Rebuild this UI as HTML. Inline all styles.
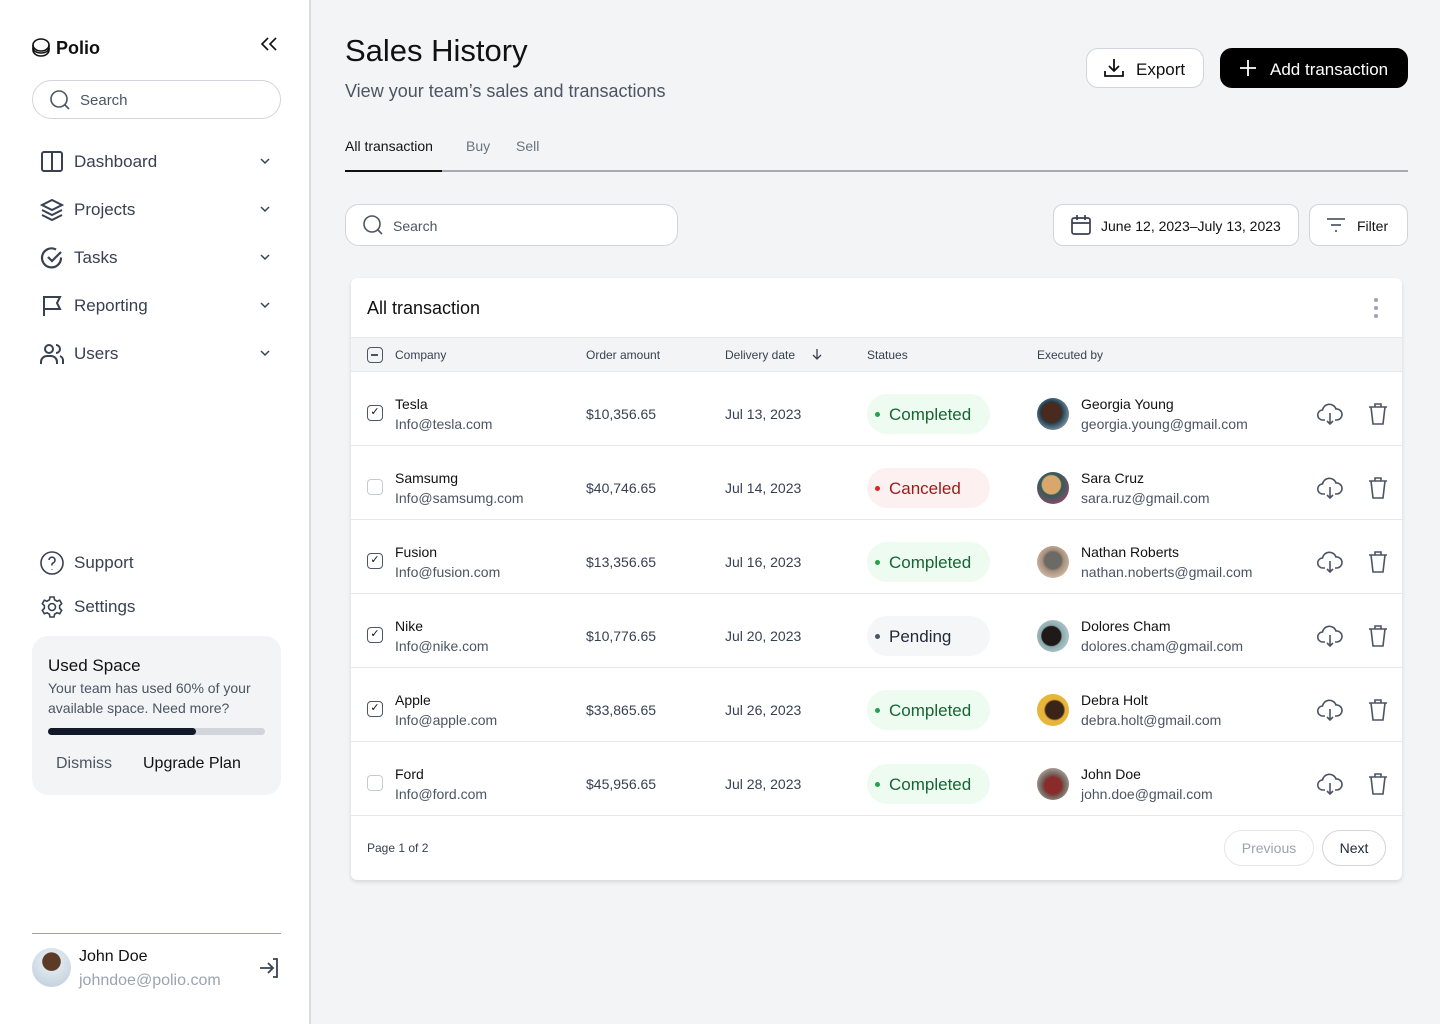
<!DOCTYPE html>
<html><head><meta charset="utf-8">
<style>
*{box-sizing:border-box;margin:0;padding:0}
body{width:1440px;height:1024px;overflow:hidden;background:#f3f4f6;font-family:"Liberation Sans",sans-serif;color:#111;position:relative}
.abs{position:absolute}
.side{position:absolute;left:0;top:0;width:311px;height:1024px;background:#fff;border-right:2px solid #d9dbe0}
.nav{position:absolute;left:40px;display:flex;align-items:center;font-size:17px;color:#374151}
.nav svg{margin-right:10px}
.chev{position:absolute;left:258px}
.card{position:absolute;left:351px;top:278px;width:1051px;height:602px;background:#fff;border-radius:6px;box-shadow:0 2px 4px rgba(0,0,0,.12)}
.row{position:absolute;left:0;width:1051px;height:74px;border-top:1px solid #e5e7eb}
.row .cb{position:absolute;left:16px;top:33px;width:16px;height:16px;border:1.5px solid #4b5563;border-radius:4px;font-size:11px;line-height:13px;text-align:center;color:#111}
.row .cb.off{border-color:#c7cbd1}
.row .co{position:absolute;left:44px;top:24px;font-size:14px;color:#111}
.row .em{position:absolute;left:44px;top:44px;font-size:14px;color:#4b5563}
.row .am{position:absolute;left:235px;top:34px;font-size:14px;color:#374151}
.row .dt{position:absolute;left:374px;top:34px;font-size:14px;color:#374151}
.pill{position:absolute;left:516px;top:22px;width:123px;height:40px;border-radius:20px;font-size:17px;padding:11px 0 0 22px}
.pill:before{content:"";position:absolute;left:8px;top:18px;width:5px;height:5px;border-radius:50%;background:currentColor}
.ok{background:#edfbf0;color:#166534}.ok:before{background:#22a34a}
.cx{background:#fdf0f0;color:#991b1b}.cx:before{background:#dc2626}
.pd{background:#f5f6f8;color:#1f2937}.pd:before{background:#4b5563}
.av{position:absolute;left:686px;top:26px;width:32px;height:32px;border-radius:50%}
.nm{position:absolute;left:730px;top:24px;font-size:14px;color:#111}
.ml{position:absolute;left:730px;top:44px;font-size:14px;color:#4b5563}
.ic1{position:absolute;left:966px;top:30px}
.ic2{position:absolute;left:1016px;top:30px}
</style></head><body>
<div class="side">
  <svg class="abs" style="left:31px;top:37px" width="20" height="22" viewBox="0 0 20 22" fill="none" stroke="#111" stroke-width="1.6"><ellipse cx="10" cy="8" rx="8" ry="6"/><path d="M2 8v5c0 3.3 3.6 6 8 6s8-2.7 8-6V8"/><path d="M2 11c0 3 3.6 5 8 5s8-2 8-5"/></svg>
  <div class="abs" style="left:56px;top:38px;font-size:18px;font-weight:bold;color:#111">Polio</div>
  <svg class="abs" style="left:259px;top:35px" width="20" height="18" viewBox="0 0 20 18" fill="none" stroke="#111" stroke-width="1.6"><path d="M9 3 3 9l6 6M17 3l-6 6 6 6"/></svg>
  <div class="abs" style="left:32px;top:80px;width:249px;height:39px;border:1.5px solid #d1d5db;border-radius:20px"></div>
  <svg class="abs" style="left:49px;top:89px" width="22" height="22" viewBox="0 0 22 22" fill="none" stroke="#4b5563" stroke-width="1.6"><circle cx="10" cy="10" r="8"/><path d="m16 16 4 4"/></svg>
  <div class="abs" style="left:80px;top:92px;font-size:15px;color:#4b5563">Search</div>

  <div class="nav" style="top:150px"><svg width="24" height="24" viewBox="0 0 24 24" fill="none" stroke="#374151" stroke-width="2"><rect x="2" y="2" width="20" height="19" rx="2"/><path d="M12 2v19"/></svg>Dashboard</div>
  <div class="nav" style="top:198px"><svg width="24" height="24" viewBox="0 0 24 24" fill="none" stroke="#374151" stroke-width="2"><path d="M12 2 2 7l10 5 10-5z"/><path d="m2 12 10 5 10-5M2 17l10 5 10-5"/></svg>Projects</div>
  <div class="nav" style="top:246px"><svg width="24" height="24" viewBox="0 0 24 24" fill="none" stroke="#374151" stroke-width="2.2"><path d="M21 11.5A9.5 9.5 0 1 1 16 3.5"/><path d="m8 11 4 4 9-9"/></svg>Tasks</div>
  <div class="nav" style="top:294px"><svg width="24" height="24" viewBox="0 0 24 24" fill="none" stroke="#374151" stroke-width="2"><path d="M4 22V3h16l-3 6 3 6H4"/></svg>Reporting</div>
  <div class="nav" style="top:342px"><svg width="24" height="24" viewBox="0 0 24 24" fill="none" stroke="#374151" stroke-width="2"><circle cx="9" cy="7" r="4"/><path d="M1 22v-2a6 6 0 0 1 6-6h4a6 6 0 0 1 6 6v2M16 3a4 4 0 0 1 0 8M20 14a5 5 0 0 1 3 5v3"/></svg>Users</div>
  <svg class="chev" style="top:156px" width="14" height="10" viewBox="0 0 14 10" fill="none" stroke="#374151" stroke-width="1.5"><path d="m3 3 4 4 4-4"/></svg>
  <svg class="chev" style="top:204px" width="14" height="10" viewBox="0 0 14 10" fill="none" stroke="#374151" stroke-width="1.5"><path d="m3 3 4 4 4-4"/></svg>
  <svg class="chev" style="top:252px" width="14" height="10" viewBox="0 0 14 10" fill="none" stroke="#374151" stroke-width="1.5"><path d="m3 3 4 4 4-4"/></svg>
  <svg class="chev" style="top:300px" width="14" height="10" viewBox="0 0 14 10" fill="none" stroke="#374151" stroke-width="1.5"><path d="m3 3 4 4 4-4"/></svg>
  <svg class="chev" style="top:348px" width="14" height="10" viewBox="0 0 14 10" fill="none" stroke="#374151" stroke-width="1.5"><path d="m3 3 4 4 4-4"/></svg>

  <div class="nav" style="top:551px"><svg width="24" height="24" viewBox="0 0 24 24" fill="none" stroke="#374151" stroke-width="1.6"><circle cx="12" cy="12" r="11"/><path d="M9 9a3 3 0 1 1 4 3c-1 .5-1 1-1 2.5M12 18v.5"/></svg>Support</div>
  <div class="nav" style="top:595px"><svg width="24" height="24" viewBox="0 0 24 24" fill="none" stroke="#374151" stroke-width="1.6"><circle cx="12" cy="12" r="3.5"/><path d="M10 2h4l.6 2.8 2.4 1.4 2.7-1 2 3.5-2.1 1.9v2.8l2.1 1.9-2 3.5-2.7-1-2.4 1.4L14 22h-4l-.6-2.8L7 17.8l-2.7 1-2-3.5 2.1-1.9v-2.8L2.3 8.7l2-3.5 2.7 1 2.4-1.4z"/></svg>Settings</div>

  <div class="abs" style="left:32px;top:636px;width:249px;height:159px;background:#f3f4f6;border-radius:16px">
    <div class="abs" style="left:16px;top:20px;font-size:17px;color:#111">Used Space</div>
    <div class="abs" style="left:16px;top:42px;width:225px;font-size:14px;line-height:20px;color:#4b5563">Your team has used 60% of your available space. Need more?</div>
    <div class="abs" style="left:16px;top:92px;width:217px;height:7px;background:#d1d5db;border-radius:4px"><div style="width:148px;height:7px;background:#111827;border-radius:4px"></div></div>
    <div class="abs" style="left:24px;top:119px;font-size:16px;color:#4b5563">Dismiss</div>
    <div class="abs" style="left:111px;top:119px;font-size:16px;color:#111">Upgrade Plan</div>
  </div>

  <div class="abs" style="left:32px;top:933px;width:249px;height:1px;background:#9ca3af"></div>
  <div class="abs" style="left:32px;top:948px;width:39px;height:39px;border-radius:50%;background:radial-gradient(circle at 50% 35%,#5b3a26 0 28%,#dfe7ee 30%,#b9c9d8 100%)"></div>
  <div class="abs" style="left:79px;top:948px;font-size:16px;color:#111">John Doe</div>
  <div class="abs" style="left:79px;top:972px;font-size:16px;color:#9ca3af">johndoe@polio.com</div>
  <svg class="abs" style="left:258px;top:957px" width="22" height="22" viewBox="0 0 22 22" fill="none" stroke="#374151" stroke-width="1.8"><path d="M2 11h12M10 6l5 5-5 5M15 2h4v18h-4"/></svg>
</div>

<div class="abs" style="left:345px;top:33px;font-size:31px;color:#111">Sales History</div>
<div class="abs" style="left:345px;top:81px;font-size:18px;color:#4b5563">View your team’s sales and transactions</div>

<div class="abs" style="left:1086px;top:48px;width:118px;height:40px;background:#fff;border:1px solid #d1d5db;border-radius:12px"></div>
<svg class="abs" style="left:1103px;top:57px" width="22" height="22" viewBox="0 0 22 22" fill="none" stroke="#111" stroke-width="1.8"><path d="M11 2v12M6 9l5 5 5-5M2 14v5h18v-5"/></svg>
<div class="abs" style="left:1136px;top:60px;font-size:17px;color:#111">Export</div>
<div class="abs" style="left:1220px;top:48px;width:188px;height:40px;background:#000;border-radius:12px"></div>
<svg class="abs" style="left:1238px;top:58px" width="20" height="20" viewBox="0 0 20 20" fill="none" stroke="#fff" stroke-width="1.8"><path d="M10 2v16M2 10h16"/></svg>
<div class="abs" style="left:1270px;top:60px;font-size:17px;color:#fff">Add transaction</div>

<div class="abs" style="left:345px;top:138px;font-size:14px;color:#111">All transaction</div>
<div class="abs" style="left:466px;top:138px;font-size:14px;color:#6b7280">Buy</div>
<div class="abs" style="left:516px;top:138px;font-size:14px;color:#6b7280">Sell</div>
<div class="abs" style="left:345px;top:170px;width:1063px;height:2px;background:#a8abb2"></div>
<div class="abs" style="left:345px;top:170px;width:97px;height:2px;background:#111"></div>

<div class="abs" style="left:345px;top:204px;width:333px;height:42px;background:#fff;border:1.5px solid #d1d5db;border-radius:14px"></div>
<svg class="abs" style="left:362px;top:214px" width="22" height="22" viewBox="0 0 22 22" fill="none" stroke="#4b5563" stroke-width="1.6"><circle cx="10" cy="10" r="8"/><path d="m16 16 4 4"/></svg>
<div class="abs" style="left:393px;top:218px;font-size:14px;color:#4b5563">Search</div>

<div class="abs" style="left:1053px;top:204px;width:246px;height:42px;background:#fff;border:1px solid #d1d5db;border-radius:10px"></div>
<svg class="abs" style="left:1070px;top:214px" width="22" height="22" viewBox="0 0 22 22" fill="none" stroke="#374151" stroke-width="1.7"><rect x="2" y="4" width="18" height="16" rx="2"/><path d="M2 9h18M7 1v5M15 1v5"/></svg>
<div class="abs" style="left:1101px;top:218px;font-size:14px;color:#111">June 12, 2023–July 13, 2023</div>
<div class="abs" style="left:1309px;top:204px;width:99px;height:42px;background:#fff;border:1px solid #d1d5db;border-radius:10px"></div>
<svg class="abs" style="left:1326px;top:216px" width="20" height="18" viewBox="0 0 20 18" fill="none" stroke="#374151" stroke-width="1.6"><path d="M1 3h18M5 9h10M9 15h2"/></svg>
<div class="abs" style="left:1357px;top:218px;font-size:14px;color:#111">Filter</div>

<div class="card">
  <div class="abs" style="left:16px;top:20px;font-size:18px;color:#111">All transaction</div>
  <svg class="abs" style="left:1021px;top:19px" width="8" height="22" viewBox="0 0 8 22" fill="#9ca3af"><circle cx="4" cy="3" r="2"/><circle cx="4" cy="11" r="2"/><circle cx="4" cy="19" r="2"/></svg>
  <div class="abs" style="left:0;top:59px;width:1051px;height:35px;background:#f3f4f6;border-top:1px solid #e5e7eb;border-bottom:1px solid #e5e7eb"></div>
  <div class="abs" style="left:16px;top:69px;width:16px;height:16px;border:1.5px solid #4b5563;border-radius:4px"><div style="position:absolute;left:3px;top:6px;width:7px;height:1.5px;background:#4b5563"></div></div>
  <div class="abs" style="left:44px;top:70px;font-size:12px;color:#374151">Company</div>
  <div class="abs" style="left:235px;top:70px;font-size:12px;color:#374151">Order amount</div>
  <div class="abs" style="left:374px;top:70px;font-size:12px;color:#374151">Delivery date</div>
  <svg class="abs" style="left:460px;top:70px" width="12" height="13" viewBox="0 0 12 13" fill="none" stroke="#374151" stroke-width="1.3"><path d="M6 1v10M2 7l4 4 4-4"/></svg>
  <div class="abs" style="left:516px;top:70px;font-size:12px;color:#374151">Statues</div>
  <div class="abs" style="left:686px;top:70px;font-size:12px;color:#374151">Executed by</div>

  <div class="row" style="top:93px"><div class="cb">✓</div><div class="co">Tesla</div><div class="em">Info@tesla.com</div><div class="am">$10,356.65</div><div class="dt">Jul 13, 2023</div><div class="pill ok">Completed</div><div class="av" style="background:radial-gradient(circle at 45% 45%,#4a2a1c 0 40%,#1d3a4d 42%,#c9d9da 100%)"></div><div class="nm">Georgia Young</div><div class="ml">georgia.young@gmail.com</div>
  <svg class="ic1" width="26" height="24" viewBox="0 0 26 24" fill="none" stroke="#4b5563" stroke-width="1.6"><path d="M8 18H6a5 5 0 0 1-.5-10A7 7 0 0 1 19 7a5 5 0 0 1 1 11h-2"/><path d="M13 11v11M10 19l3 3 3-3"/></svg><svg class="ic2" width="22" height="24" viewBox="0 0 22 24" fill="none" stroke="#4b5563" stroke-width="1.6"><path d="M2 5h18M8 5V2h6v3M4 5l2 17h10l2-17"/></svg></div>

  <div class="row" style="top:167px"><div class="cb off"></div><div class="co">Samsumg</div><div class="em">Info@samsumg.com</div><div class="am">$40,746.65</div><div class="dt">Jul 14, 2023</div><div class="pill cx">Canceled</div><div class="av" style="background:radial-gradient(circle at 45% 40%,#d9a66b 0 35%,#2f5d57 40%,#c83a7a 100%)"></div><div class="nm">Sara Cruz</div><div class="ml">sara.ruz@gmail.com</div>
  <svg class="ic1" width="26" height="24" viewBox="0 0 26 24" fill="none" stroke="#4b5563" stroke-width="1.6"><path d="M8 18H6a5 5 0 0 1-.5-10A7 7 0 0 1 19 7a5 5 0 0 1 1 11h-2"/><path d="M13 11v11M10 19l3 3 3-3"/></svg><svg class="ic2" width="22" height="24" viewBox="0 0 22 24" fill="none" stroke="#4b5563" stroke-width="1.6"><path d="M2 5h18M8 5V2h6v3M4 5l2 17h10l2-17"/></svg></div>

  <div class="row" style="top:241px"><div class="cb">✓</div><div class="co">Fusion</div><div class="em">Info@fusion.com</div><div class="am">$13,356.65</div><div class="dt">Jul 16, 2023</div><div class="pill ok">Completed</div><div class="av" style="background:radial-gradient(circle at 50% 45%,#6b6a66 0 35%,#a98f7a 45%,#e6ddd3 100%)"></div><div class="nm">Nathan Roberts</div><div class="ml">nathan.noberts@gmail.com</div>
  <svg class="ic1" width="26" height="24" viewBox="0 0 26 24" fill="none" stroke="#4b5563" stroke-width="1.6"><path d="M8 18H6a5 5 0 0 1-.5-10A7 7 0 0 1 19 7a5 5 0 0 1 1 11h-2"/><path d="M13 11v11M10 19l3 3 3-3"/></svg><svg class="ic2" width="22" height="24" viewBox="0 0 22 24" fill="none" stroke="#4b5563" stroke-width="1.6"><path d="M2 5h18M8 5V2h6v3M4 5l2 17h10l2-17"/></svg></div>

  <div class="row" style="top:315px"><div class="cb">✓</div><div class="co">Nike</div><div class="em">Info@nike.com</div><div class="am">$10,776.65</div><div class="dt">Jul 20, 2023</div><div class="pill pd">Pending</div><div class="av" style="background:radial-gradient(circle at 45% 50%,#1f1a18 0 40%,#8aa8ac 45%,#cfe0e1 100%)"></div><div class="nm">Dolores Cham</div><div class="ml">dolores.cham@gmail.com</div>
  <svg class="ic1" width="26" height="24" viewBox="0 0 26 24" fill="none" stroke="#4b5563" stroke-width="1.6"><path d="M8 18H6a5 5 0 0 1-.5-10A7 7 0 0 1 19 7a5 5 0 0 1 1 11h-2"/><path d="M13 11v11M10 19l3 3 3-3"/></svg><svg class="ic2" width="22" height="24" viewBox="0 0 22 24" fill="none" stroke="#4b5563" stroke-width="1.6"><path d="M2 5h18M8 5V2h6v3M4 5l2 17h10l2-17"/></svg></div>

  <div class="row" style="top:389px"><div class="cb">✓</div><div class="co">Apple</div><div class="em">Info@apple.com</div><div class="am">$33,865.65</div><div class="dt">Jul 26, 2023</div><div class="pill ok">Completed</div><div class="av" style="background:radial-gradient(circle at 55% 50%,#3a2418 0 38%,#e6b43a 45%,#e9b935 100%)"></div><div class="nm">Debra Holt</div><div class="ml">debra.holt@gmail.com</div>
  <svg class="ic1" width="26" height="24" viewBox="0 0 26 24" fill="none" stroke="#4b5563" stroke-width="1.6"><path d="M8 18H6a5 5 0 0 1-.5-10A7 7 0 0 1 19 7a5 5 0 0 1 1 11h-2"/><path d="M13 11v11M10 19l3 3 3-3"/></svg><svg class="ic2" width="22" height="24" viewBox="0 0 22 24" fill="none" stroke="#4b5563" stroke-width="1.6"><path d="M2 5h18M8 5V2h6v3M4 5l2 17h10l2-17"/></svg></div>

  <div class="row" style="top:463px"><div class="cb off"></div><div class="co">Ford</div><div class="em">Info@ford.com</div><div class="am">$45,956.65</div><div class="dt">Jul 28, 2023</div><div class="pill ok">Completed</div><div class="av" style="background:radial-gradient(circle at 50% 55%,#8b2a2a 0 35%,#6e5a52 45%,#d8d6d3 100%)"></div><div class="nm">John Doe</div><div class="ml">john.doe@gmail.com</div>
  <svg class="ic1" width="26" height="24" viewBox="0 0 26 24" fill="none" stroke="#4b5563" stroke-width="1.6"><path d="M8 18H6a5 5 0 0 1-.5-10A7 7 0 0 1 19 7a5 5 0 0 1 1 11h-2"/><path d="M13 11v11M10 19l3 3 3-3"/></svg><svg class="ic2" width="22" height="24" viewBox="0 0 22 24" fill="none" stroke="#4b5563" stroke-width="1.6"><path d="M2 5h18M8 5V2h6v3M4 5l2 17h10l2-17"/></svg></div>

  <div class="abs" style="left:0;top:537px;width:1051px;height:1px;background:#e5e7eb"></div>
  <div class="abs" style="left:16px;top:563px;font-size:12px;color:#374151">Page 1 of 2</div>
  <div class="abs" style="left:873px;top:552px;width:90px;height:36px;border:1px solid #e5e7eb;border-radius:18px;font-size:14px;color:#9ca3af;text-align:center;line-height:34px">Previous</div>
  <div class="abs" style="left:971px;top:552px;width:64px;height:36px;border:1px solid #d1d5db;border-radius:18px;font-size:14px;color:#1f2937;text-align:center;line-height:34px">Next</div>
</div>
</body></html>
